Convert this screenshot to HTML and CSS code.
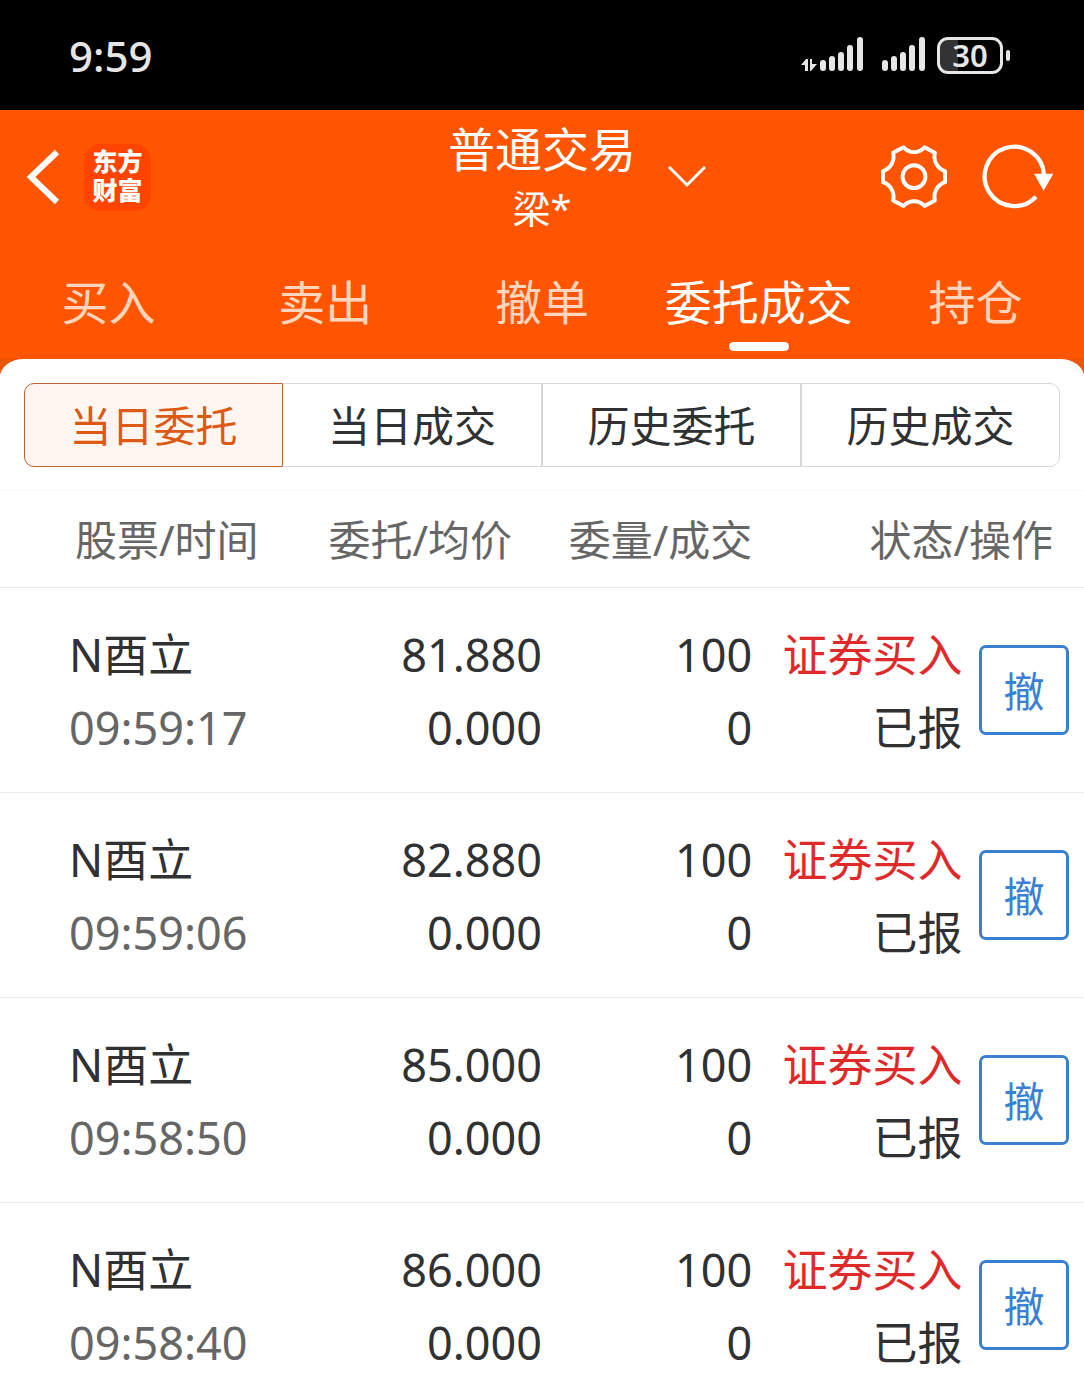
FILE: index.html
```
<!DOCTYPE html>
<html lang="zh-CN">
<head>
    <meta charset="UTF-8">
    <meta name="viewport" content="width=device-width, initial-scale=1.0">
    <title>普通交易</title>
    <link rel="stylesheet" href="styles.css">
</head>
<body>
    <div class="status-bar">
        <span class="time">9:59</span>
        <div class="status-icons">
            <svg width="62" height="36" viewBox="0 0 62 36" fill="#e6e6e6">
                <path d="M0 28L5 22H7V34H4V28ZM9 22H11V27H16L10 34H9Z"/>
                <rect x="19" y="23" width="6" height="11" rx="3"/>
                <rect x="28" y="19" width="6" height="15" rx="3"/>
                <rect x="37" y="15" width="6" height="19" rx="3"/>
                <rect x="46" y="8" width="6" height="26" rx="3"/>
                <rect x="56" y="0" width="6" height="34" rx="3"/>
            </svg>
            <svg width="43" height="36" viewBox="0 0 43 36" fill="#e6e6e6">
                <rect x="0" y="23" width="6" height="11" rx="3"/>
                <rect x="9" y="19" width="6" height="15" rx="3"/>
                <rect x="18" y="15" width="6" height="19" rx="3"/>
                <rect x="27" y="8" width="6" height="26" rx="3"/>
                <rect x="37" y="0" width="6" height="34" rx="3"/>
            </svg>
            <span class="battery">30</span>
        </div>
    </div>

    <header>
        <div class="top">
            <div class="top-left">
                <button class="icon-button" aria-label="返回">
                    <svg width="34" height="56" viewBox="0 0 34 56" fill="none" stroke="#fff" stroke-width="6">
                        <path d="M31 3L5 28L31 53"/>
                    </svg>
                </button>
                <div class="logo">
                    <span>东方</span>
                    <span>财富</span>
                </div>
            </div>
            <div class="title">
                <h1>普通交易</h1>
                <p>梁*</p>
            </div>
            <div class="top-right">
                <button class="icon-button" aria-label="切换账户">
                    <svg width="38" height="22" viewBox="0 0 38 22" fill="none" stroke="#fff" stroke-width="3">
                        <path d="M1 1L19 19L37 1"/>
                    </svg>
                </button>
                <div class="tools">
                    <button class="icon-button" aria-label="设置">
                        <svg width="66" height="66" viewBox="-1 -1 202 198" fill="none" stroke="#fff" stroke-width="12" stroke-linejoin="round">
                            <path d="M36 24L68 7A42 42 0 0 0 132 7L164 24A47 47 0 0 0 195 80V114A47 47 0 0 0 164 170L132 187A42 42 0 0 0 68 187L36 170A47 47 0 0 0 5 114V80A47 47 0 0 0 36 24Z"/>
                            <circle cx="100" cy="97" r="35"/>
                        </svg>
                    </button>
                    <button class="icon-button" aria-label="刷新">
                        <svg width="72" height="66" viewBox="0 -1 216 198" fill="none" stroke="#fff" stroke-width="13">
                            <path d="M186 92A89 89 0 1 0 162 157"/>
                            <path d="M156 88H214L185 139Z" fill="#fff" stroke="none"/>
                        </svg>
                    </button>
                </div>
            </div>
        </div>
        <nav class="tabs">
            <a href="#">买入</a>
            <a href="#">卖出</a>
            <a href="#">撤单</a>
            <a href="#" class="active">委托成交</a>
            <a href="#">持仓</a>
        </nav>
    </header>

    <main>
        <div class="segments">
            <button class="active">当日委托</button>
            <button>当日成交</button>
            <button>历史委托</button>
            <button>历史成交</button>
        </div>

        <table class="orders">
            <colgroup>
                <col class="col-stock">
                <col class="col-price">
                <col class="col-amount">
                <col class="col-state">
                <col>
            </colgroup>
            <thead>
                <tr>
                    <th>股票/时间</th>
                    <th>委托/均价</th>
                    <th>委量/成交</th>
                    <th colspan="2">状态/操作</th>
                </tr>
            </thead>
            <tbody>
                <tr>
                    <td>N酉立<span class="line muted">09:59:17</span></td>
                    <td>81.880<span class="line">0.000</span></td>
                    <td>100<span class="line">0</span></td>
                    <td><span class="buy">证券买入</span><span class="line">已报</span></td>
                    <td><button class="cancel">撤</button></td>
                </tr>
                <tr>
                    <td>N酉立<span class="line muted">09:59:06</span></td>
                    <td>82.880<span class="line">0.000</span></td>
                    <td>100<span class="line">0</span></td>
                    <td><span class="buy">证券买入</span><span class="line">已报</span></td>
                    <td><button class="cancel">撤</button></td>
                </tr>
                <tr>
                    <td>N酉立<span class="line muted">09:58:50</span></td>
                    <td>85.000<span class="line">0.000</span></td>
                    <td>100<span class="line">0</span></td>
                    <td><span class="buy">证券买入</span><span class="line">已报</span></td>
                    <td><button class="cancel">撤</button></td>
                </tr>
                <tr>
                    <td>N酉立<span class="line muted">09:58:40</span></td>
                    <td>86.000<span class="line">0.000</span></td>
                    <td>100<span class="line">0</span></td>
                    <td><span class="buy">证券买入</span><span class="line">已报</span></td>
                    <td><button class="cancel">撤</button></td>
                </tr>
            </tbody>
        </table>
    </main>
</body>
</html>
```
FILE: styles.css
```
* {
    box-sizing: border-box;
}
body {
    font-family: "Noto Sans", "Noto Sans CJK SC", sans-serif;
    margin: 0;
    height: 100vh;
    display: flex;
    flex-direction: column;
    overflow: hidden;
    background: #fff;
    color: #303133;
}
button {
    font-family: inherit;
    color: inherit;
    padding: 0;
    cursor: pointer;
}
svg {
    display: block;
}

/* status bar */
.status-bar {
    flex: none;
    height: 110px;
    padding: 0 81px 0 69px;
    background: #000;
    color: #e6e6e6;
    display: flex;
    justify-content: space-between;
    align-items: center;
}
.time {
    font-size: 42px;
    font-weight: 500;
}
.status-icons {
    display: flex;
    align-items: center;
    gap: 19px;
}
.battery {
    position: relative;
    width: 66px;
    height: 37px;
    margin-left: -7px;
    border: 3px solid #e6e6e6;
    border-radius: 11px;
    background: linear-gradient(to right, #333 30%, #000 30%);
    font-size: 31px;
    font-weight: 600;
    line-height: 31px;
    text-align: center;
}
.battery::after {
    content: "";
    position: absolute;
    right: -10px;
    top: 10px;
    width: 4px;
    height: 11px;
    border-radius: 2px;
    background: #e6e6e6;
}

/* header */
header {
    flex: none;
    background: #ff5500;
    color: #fff;
}
.top {
    display: grid;
    grid-template-columns: 1fr auto 1fr;
    align-items: center;
    height: 134px;
}
.top-left {
    display: flex;
    align-items: center;
    gap: 24px;
    padding-left: 26px;
}
.top-right {
    display: flex;
    align-items: center;
    justify-content: space-between;
    padding: 0 30px 0 32px;
}
.tools {
    display: flex;
    gap: 35px;
}
.icon-button {
    border: 0;
    background: none;
}
.logo {
    display: grid;
    align-content: center;
    width: 67px;
    height: 67px;
    border-radius: 16px;
    background: #ff4400;
    font-family: "Liberation Sans", "Noto Sans CJK SC", sans-serif;
    font-size: 25px;
    font-weight: 900;
    line-height: 29px;
    text-align: center;
}
.title {
    text-align: center;
}
.title h1 {
    margin: 0;
    font-size: 47px;
    font-weight: 400;
    line-height: 62px;
}
.title p {
    margin: 0;
    font-size: 38px;
    line-height: 56px;
}
.tabs {
    display: grid;
    grid-template-columns: repeat(5, 1fr);
    height: 115px;
}
.tabs a {
    position: relative;
    color: #ffd5bd;
    font-size: 47px;
    line-height: 116px;
    text-align: center;
    text-decoration: none;
}
.tabs .active {
    color: #fff;
}
.tabs .active::after {
    content: "";
    position: absolute;
    left: 50%;
    bottom: 9px;
    width: 60px;
    height: 9px;
    margin-left: -30px;
    border-radius: 5px;
    background: #fff;
}

/* order list */
main {
    flex: 1;
    min-height: 0;
    overflow-y: auto;
    scrollbar-width: none;
    background: linear-gradient(#eb570a 15px, #fff 15px);
}
.segments {
    display: grid;
    grid-template-columns: repeat(4, 1fr);
    padding: 24px 24px 23px;
    border-bottom: 1px solid #f7f7f7;
    border-radius: 24px 24px 0 0 / 18px 18px 0 0;
    background: #fff;
}
.segments button {
    height: 84px;
    padding-bottom: 4px;
    border: 1px solid #d5d7db;
    background: #fff;
    font-size: 42px;
}
.segments .active {
    border-color: #c0622f;
    border-radius: 10px 0 0 10px;
    background: #fff6f2;
    color: #dd5a14;
}
.segments .active + button {
    border-left: 0;
}
.segments button:last-child {
    border-radius: 0 10px 10px 0;
}
.orders {
    width: 100%;
    table-layout: fixed;
    border-collapse: separate;
    border-spacing: 0;
}
.col-stock,
.col-price {
    width: 25%;
}
.col-amount,
.col-state {
    width: 19.4%;
}
th,
td {
    padding: 0;
    border-bottom: 1px solid #ebebeb;
    text-align: right;
    white-space: nowrap;
}
th {
    height: 97px;
    padding-bottom: 4px;
    color: #666;
    font-size: 42px;
    font-weight: 400;
}
th:first-child {
    padding-left: 75px;
    text-align: left;
}
th:nth-child(2) {
    padding-right: 30px;
}
th:last-child {
    padding-right: 31px;
}
td {
    padding: 30px 0 28px;
    font-size: 45px;
    line-height: 73px;
}
td:first-child {
    padding-left: 69px;
    text-align: left;
}
td:last-child {
    padding: 0 15px 0 0;
}
.line {
    display: block;
}
.muted {
    color: #666;
}
.buy {
    color: #e02a2a;
}
.cancel {
    display: block;
    width: 90px;
    height: 90px;
    margin-left: auto;
    padding-bottom: 3px;
    border: 3px solid #3b7fcf;
    border-radius: 7px;
    background: #fff;
    color: #3b7fd6;
    font-size: 41px;
}
```
